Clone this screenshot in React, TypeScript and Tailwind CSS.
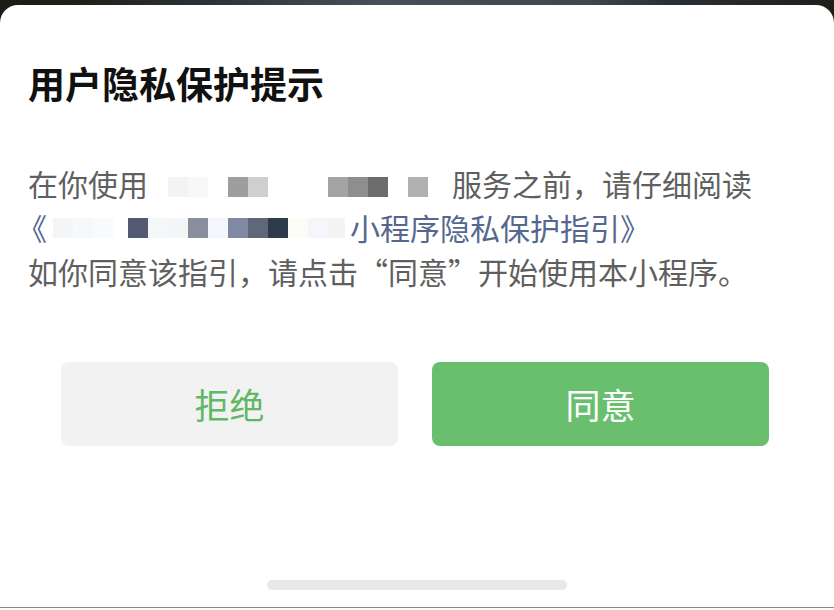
const cjk = { fontFamily: '"Noto Sans CJK SC", "Noto Sans", sans-serif' }

// mosaic pieces covering the app name: [width, colour or null for a gap]
const nameMosaic: [number, string | null][] = [
  [20, null],
  [20, '#f3f3f3'],
  [20, '#f8f8f8'],
  [20, null],
  [20, '#9e9e9e'],
  [20, '#cfcfcf'],
  [60, null],
  [20, '#a4a4a4'],
  [20, '#8e8e8e'],
  [20, '#6c6c6c'],
  [20, null],
  [20, '#b0b0b0'],
  [24, null],
]

const guideMosaic: [number, string | null][] = [
  [20, '#f4f5f7'],
  [20, '#f6f8fa'],
  [20, '#f8fbfc'],
  [15, null],
  [20, '#545a72'],
  [20, '#f5f8f9'],
  [20, '#f3f6f7'],
  [20, '#8a8d9c'],
  [20, '#f4f6fb'],
  [20, '#7f8aa2'],
  [20, '#5e6878'],
  [20, '#2f3a4a'],
  [20, '#fdfdf8'],
  [20, '#f7f4fb'],
  [17, '#f3f5f3'],
  [5, null],
]

function Mosaic({ pieces, className }: { pieces: [number, string | null][]; className: string }) {
  return (
    <span className={`inline-flex h-[20px] ${className}`}>
      {pieces.map(([w, c], i) => (
        <span key={i} className="h-full" style={{ width: w, backgroundColor: c ?? 'transparent' }} />
      ))}
    </span>
  )
}

export default function App() {
  return (
    <div
      className="w-[834px] h-[610px] flex flex-col overflow-hidden bg-[linear-gradient(90deg,#1b1d15_0%,#20231c_12%,#2c323a_25%,#46505a_45%,#3f4850_70%,#2b3037_80%,#1c1f18_100%)]"
      style={cjk}
    >
      <div className="h-[5px] shrink-0" />

      <div className="flex-1 flex flex-col bg-white rounded-t-[18px]">
        {/* Title */}
        <h1 className="pt-[54px] px-[28px] text-[37px] leading-[48px] font-bold text-[#111111]">
          用户隐私保护提示
        </h1>

        {/* Body */}
        <div className="mt-[54px] px-[28px] text-[30px] leading-[44px] text-[#5f5f5f]">
          <p>
            在你使用
            <Mosaic pieces={nameMosaic} className="align-[-1px]" />
            服务之前，请仔细阅读
          </p>
          <p className="text-[#56678f]">
            <span className="-ml-[11px] mr-[6px]">《</span>
            <Mosaic pieces={guideMosaic} className="align-[2px]" />
            小程序隐私保护指引》
          </p>
          <p>如你同意该指引，请点击“同意”开始使用本小程序。</p>
        </div>

        {/* Buttons */}
        <div className="mt-[69px] pl-[61px] pr-[65px] flex gap-[34px]">
          <button className="flex-1 h-[84px] rounded-[8px] bg-[#f2f2f2] text-[35px] text-[#5fb865]">
            拒绝
          </button>
          <button className="flex-1 h-[84px] rounded-[8px] bg-[#6abf6e] text-[35px] text-white">
            同意
          </button>
        </div>

        {/* Home indicator */}
        <div className="mt-auto mb-[17px] self-center w-[300px] h-[10px] rounded-full bg-[#e8e8e8]" />
      </div>

      <div className="h-[3px] shrink-0 bg-white border-t border-[#8a8a8a]" />
    </div>
  )
}
